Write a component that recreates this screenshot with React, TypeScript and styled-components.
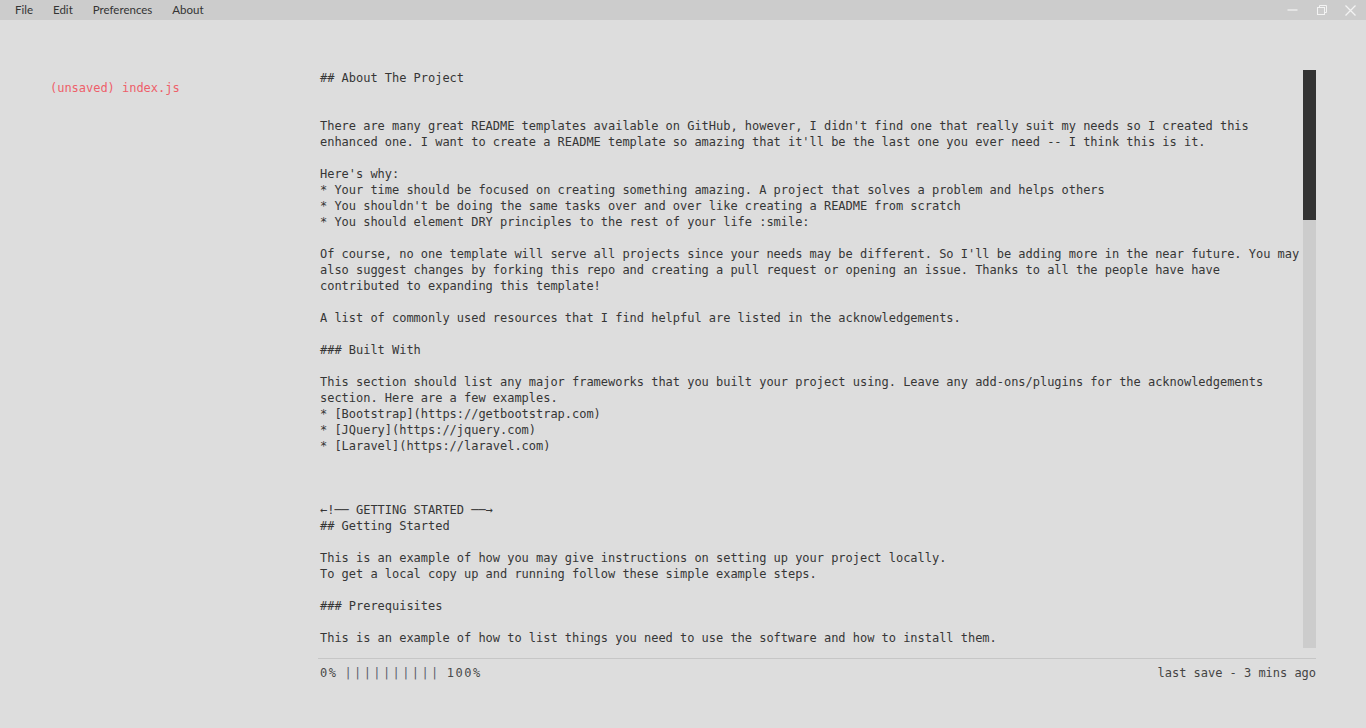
import React from "react";
import styled, { createGlobalStyle } from "styled-components";

const GlobalStyle = createGlobalStyle`
  html, body {
    margin: 0;
    padding: 0;
    height: 100%;
    overflow: hidden;
    background: #dddddd;
  }
  #root { height: 100%; }
`;

const Window = styled.div`
  width: 100vw;
  height: 100vh;
  display: flex;
  flex-direction: column;
  background: #dddddd;
  font-family: "DejaVu Sans Mono", "Liberation Mono", monospace;
`;

const MenuBar = styled.header`
  flex: none;
  height: 20px;
  display: flex;
  align-items: center;
  background: #cccccc;
  padding-left: 15px;
`;

const Menu = styled.nav`
  display: flex;
  gap: 20px;
  font-family: Lato, "Noto Sans", sans-serif;
  font-size: 11.5px;
  line-height: 20px;
  color: #343434;
`;

const MenuItem = styled.span`
  cursor: default;
`;

const Controls = styled.div`
  margin-left: auto;
  display: flex;
  height: 100%;
  padding-right: 1px;
`;

const ControlButton = styled.button`
  width: 29px;
  height: 20px;
  border: 0;
  padding: 0;
  background: transparent;
  display: flex;
  align-items: center;
  justify-content: center;
  color: #f3f3f3;
`;

const Main = styled.main`
  flex: 1;
  min-height: 0;
  display: flex;
  padding-top: 50px;
`;

const Sidebar = styled.aside`
  flex: none;
  width: 318px;
  box-sizing: border-box;
  padding: 10px 0 0 50px;
  font-size: 12px;
  line-height: 16px;
  letter-spacing: -0.025px;
  color: #ee5f6a;
`;

const EditorColumn = styled.section`
  flex: none;
  width: 998px;
  display: flex;
  flex-direction: column;
`;

const EditorFrame = styled.div`
  height: 578px;
  display: flex;
`;

const Editor = styled.textarea`
  display: block;
  flex: 1;
  min-width: 0;
  height: 100%;
  box-sizing: border-box;
  margin: 0;
  padding: 0 0 0 2px;
  border: none;
  outline: none;
  resize: none;
  background: transparent;
  font-family: "DejaVu Sans Mono", "Liberation Mono", monospace;
  font-size: 12px;
  line-height: 16px;
  letter-spacing: -0.025px;
  color: #363636;
  overflow: hidden;
`;

const ScrollTrack = styled.div`
  flex: none;
  width: 13px;
  height: 100%;
  background: #cccccc;
  display: flex;
  flex-direction: column;
`;

const ScrollThumb = styled.div`
  flex: none;
  width: 100%;
  background: #333333;
`;

const StatusBar = styled.footer`
  margin-top: 10px;
  border-top: 1px solid #c6c6c6;
  padding: 6px 0 0 2px;
  display: flex;
  justify-content: space-between;
  font-size: 12px;
  line-height: 16px;
  color: #4a4a4a;
`;

const Progress = styled.div`
  display: flex;
`;

const Percent = styled.span<{ $gap?: number }>`
  letter-spacing: 1.5px;
  margin-left: ${(p) => p.$gap ?? 0}px;
`;

const Pipes = styled.span`
  margin-left: 7px;
  letter-spacing: 2.4px;
  color: #5a5a6a;
`;

const SaveInfo = styled.span`
  color: #444444;
  letter-spacing: -0.025px;
`;

const lines: string[] = [
  "## About The Project",
  "",
  "",
  "There are many great README templates available on GitHub, however, I didn't find one that really suit my needs so I created this enhanced one. I want to create a README template so amazing that it'll be the last one you ever need -- I think this is it.",
  "",
  "Here's why:",
  "* Your time should be focused on creating something amazing. A project that solves a problem and helps others",
  "* You shouldn't be doing the same tasks over and over like creating a README from scratch",
  "* You should element DRY principles to the rest of your life :smile:",
  "",
  "Of course, no one template will serve all projects since your needs may be different. So I'll be adding more in the near future. You may also suggest changes by forking this repo and creating a pull request or opening an issue. Thanks to all the people have have contributed to expanding this template!",
  "",
  "A list of commonly used resources that I find helpful are listed in the acknowledgements.",
  "",
  "### Built With",
  "",
  "This section should list any major frameworks that you built your project using. Leave any add-ons/plugins for the acknowledgements section. Here are a few examples.",
  "* [Bootstrap](https://getbootstrap.com)",
  "* [JQuery](https://jquery.com)",
  "* [Laravel](https://laravel.com)",
  "",
  "",
  "",
  "←!── GETTING STARTED ──→",
  "## Getting Started",
  "",
  "This is an example of how you may give instructions on setting up your project locally.",
  "To get a local copy up and running follow these simple example steps.",
  "",
  "### Prerequisites",
  "",
  "This is an example of how to list things you need to use the software and how to install them.",
  "* npm",
  "  ```sh",
  "  npm install npm@latest -g",
  "  ```",
  "",
  "### Installation",
  "",
  "1. Get a free API Key at [https://example.com](https://example.com)",
  "2. Clone the repo",
  "   ```sh",
  "   git clone https://github.com/your_username_/Project-Name.git",
  "   ```",
  "3. Install NPM packages",
  "   ```sh",
  "   npm install",
  "   ```",
  "4. Enter your API in `config.js`",
  "   ```JS",
  "   const API_KEY = 'ENTER YOUR API';",
  "   ```",
  "",
  "",
  "",
  "←!── USAGE EXAMPLES ──→",
  "## Usage",
  "",
  "Use this space to show useful examples of how a project can be used. Additional screenshots, code examples and demos work well in this space. You may also link to more resources.",
  "",
  "_For more examples, please refer to the [Documentation](https://example.com)_",
  "",
  "",
  "",
  "←!── ROADMAP ──→",
  "## Roadmap",
  "",
  "See the [open issues](https://github.com/othneildrew/Best-README-Template/issues) for a list of proposed features (and known issues).",
  "",
  "",
  "",
  "←!── CONTRIBUTING ──→",
  "## Contributing",
  "",
  "Contributions are what make the open source community such an amazing place to be learn, inspire, and create. Any contributions you make are **greatly appreciated**.",
  "",
  "1. Fork the Project",
  "2. Create your Feature Branch (`git checkout -b feature/AmazingFeature`)",
  "3. Commit your Changes (`git commit -m 'Add some AmazingFeature'`)",
  "4. Push to the Branch (`git push origin feature/AmazingFeature`)",
  "5. Open a Pull Request",
  "",
  "",
  "",
  "←!── LICENSE ──→",
  "## License",
  "",
  "Distributed under the MIT License. See `LICENSE` for more information.",
  "",
  "",
  "",
  "←!── CONTACT ──→",
  "## Contact",
  "",
  "Your Name - [@your_twitter](https://twitter.com/your_username) - email@example.com",
  "",
  "Project Link: [https://github.com/your_username/repo_name](https://github.com/your_username/repo_name)",
  "",
  "",
  "",
  "←!── ACKNOWLEDGEMENTS ──→",
  "## Acknowledgements",
  "* [GitHub Emoji Cheat Sheet](https://www.webpagefx.com/tools/emoji-cheat-sheet)",
  "* [Img Shields](https://shields.io)",
  "* [Choose an Open Source License](https://choosealicense.com)",
  "* [GitHub Pages](https://pages.github.com)",
  "* [Animate.css](https://daneden.github.io/animate.css)",
  "* [Loaders.css](https://connoratherton.com/loaders)",
  "* [Slick Carousel](https://kenwheeler.github.io/slick)",
  "* [Smooth Scroll](https://github.com/cferdinandi/smooth-scroll)",
  "* [Sticky Kit](http://leafo.net/sticky-kit)",
  "* [JVectorMap](http://jvectormap.com)",
  "* [Font Awesome](https://fontawesome.com)",
];

const TRACK_HEIGHT = 578;
const VISIBLE_LINES = 36;
const TOTAL_LINES = 139;

const MinimizeIcon = () => (
  <svg width="11" height="11" viewBox="0 0 11 11" fill="none" stroke="currentColor" strokeWidth="1.2">
    <path d="M0.5 5H10.5" />
  </svg>
);

const RestoreIcon = () => (
  <svg width="10" height="10" viewBox="0 0 10 10" fill="none" stroke="currentColor" strokeWidth="1">
    <rect x="0.5" y="2.5" width="7" height="7" />
    <path d="M2.5 2.5V0.5H9.5V7.5H7.5" />
  </svg>
);

const CloseIcon = () => (
  <svg width="11" height="11" viewBox="0 0 11 11" fill="none" stroke="currentColor" strokeWidth="1.3">
    <path d="M0.5 0.5L10.5 10.5M10.5 0.5L0.5 10.5" />
  </svg>
);

export default function App() {
  const thumbHeight = Math.round((TRACK_HEIGHT * VISIBLE_LINES) / TOTAL_LINES);
  return (
    <>
      <GlobalStyle />
      <Window>
        <MenuBar>
          <Menu>
            <MenuItem>File</MenuItem>
            <MenuItem>Edit</MenuItem>
            <MenuItem>Preferences</MenuItem>
            <MenuItem>About</MenuItem>
          </Menu>
          <Controls>
            <ControlButton aria-label="Minimize">
              <MinimizeIcon />
            </ControlButton>
            <ControlButton aria-label="Restore">
              <RestoreIcon />
            </ControlButton>
            <ControlButton aria-label="Close">
              <CloseIcon />
            </ControlButton>
          </Controls>
        </MenuBar>
        <Main>
          <Sidebar>(unsaved) index.js</Sidebar>
          <EditorColumn>
            <EditorFrame>
              <Editor spellCheck={false} defaultValue={lines.join("\n")} />
              <ScrollTrack>
                <ScrollThumb style={{ height: thumbHeight }} />
              </ScrollTrack>
            </EditorFrame>
            <StatusBar>
              <Progress>
                <Percent>0%</Percent>
                <Pipes>||||||||||</Pipes>
                <Percent $gap={6}>100%</Percent>
              </Progress>
              <SaveInfo>last save - 3 mins ago</SaveInfo>
            </StatusBar>
          </EditorColumn>
        </Main>
      </Window>
    </>
  );
}
